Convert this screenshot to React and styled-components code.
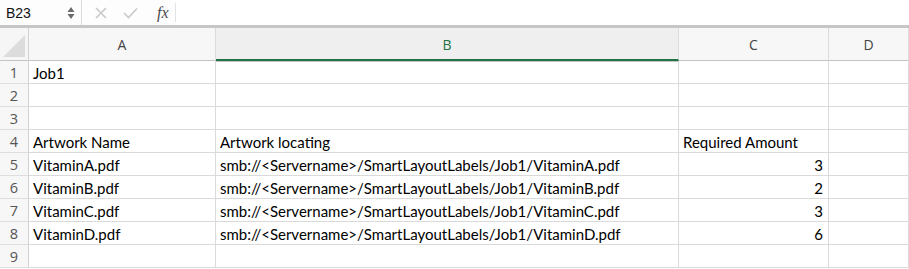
import React from "react";
import styled, { createGlobalStyle } from "styled-components";

const GlobalStyle = createGlobalStyle`
  html, body {
    margin: 0;
    padding: 0;
    background: #fff;
  }
`;

const columns = [
  { key: "A", width: 187 },
  { key: "B", width: 463, active: true },
  { key: "C", width: 150 },
  { key: "D", width: 80 },
];

const rows = [
  ["Job1", "", "", ""],
  ["", "", "", ""],
  ["", "", "", ""],
  ["Artwork Name", "Artwork locating", "Required Amount", ""],
  ["VitaminA.pdf", "smb://<Servername>/SmartLayoutLabels/Job1/VitaminA.pdf", 3, ""],
  ["VitaminB.pdf", "smb://<Servername>/SmartLayoutLabels/Job1/VitaminB.pdf", 2, ""],
  ["VitaminC.pdf", "smb://<Servername>/SmartLayoutLabels/Job1/VitaminC.pdf", 3, ""],
  ["VitaminD.pdf", "smb://<Servername>/SmartLayoutLabels/Job1/VitaminD.pdf", 6, ""],
  ["", "", "", ""],
];

const App = () => {
  return (
    <Wrapper>
      <GlobalStyle />
      {/* FORMULA BAR */}
      <FormulaBar>
        <NameBox>
          <span>B23</span>
          <Stepper>
            <svg width="8" height="14" viewBox="0 0 8 14">
              <path d="M4 1 L7.5 6 L0.5 6 Z" fill="#6b6b6b" />
              <path d="M4 13 L7.5 8 L0.5 8 Z" fill="#6b6b6b" />
            </svg>
          </Stepper>
        </NameBox>
        <Actions>
          <svg width="12" height="12" viewBox="0 0 12 12">
            <path d="M1 1 L11 11 M11 1 L1 11" stroke="#c9c9c9" strokeWidth="1.6" />
          </svg>
          <svg width="15" height="12" viewBox="0 0 15 12">
            <path d="M1 6 L5.5 10.5 L14 1.5" stroke="#c9c9c9" strokeWidth="1.6" fill="none" />
          </svg>
          <Fx>fx</Fx>
        </Actions>
        <FormulaInput />
      </FormulaBar>

      {/* SHEET */}
      <Sheet>
        <Corner>
          <svg width="22" height="22" viewBox="0 0 22 22">
            <path d="M22 0 L22 22 L0 22 Z" fill="#dcdcdc" />
          </svg>
        </Corner>
        {columns.map((col) => (
          <ColHeader key={col.key} $active={col.active}>
            {col.key}
          </ColHeader>
        ))}

        {rows.map((row, r) => (
          <React.Fragment key={r}>
            <RowHeader>{r + 1}</RowHeader>
            {row.map((val, c) => (
              <Cell key={c} $num={typeof val === "number"}>
                {val}
              </Cell>
            ))}
          </React.Fragment>
        ))}
      </Sheet>
    </Wrapper>
  );
};

const Wrapper = styled.div`
  width: 909px;
  height: 269px;
  overflow: hidden;
  background: #fff;
`;

const FormulaBar = styled.div`
  height: 25px;
  display: flex;
  align-items: stretch;
  background: #fdfdfd;
  border-bottom: 1px solid #c6c6c6;
  box-shadow: 0 2px 0 #c6c6c6;
  margin-bottom: 2px;
`;

const NameBox = styled.div`
  width: 82px;
  display: flex;
  align-items: center;
  justify-content: space-between;
  padding: 0 6px 0 6px;
  box-sizing: border-box;
  border-right: 1px solid #dcdcdc;
  font-family: "Liberation Sans", Arial, sans-serif;
  font-size: 14px;
  color: #111;
`;

const Stepper = styled.div`
  display: flex;
  align-items: center;
  padding-top: 1px;
`;

const Actions = styled.div`
  width: 94px;
  display: flex;
  align-items: center;
  gap: 16px;
  padding-left: 13px;
  box-sizing: border-box;
  border-right: 1px solid #e3e3e3;
  margin: 3px 0;
`;

const Fx = styled.span`
  font-family: "Liberation Serif", "Times New Roman", serif;
  font-style: italic;
  font-size: 16px;
  color: #4a4a4a;
  margin-left: 3px;
`;

const FormulaInput = styled.div`
  flex: 1;
  background: #fff;
`;

const Sheet = styled.div`
  display: grid;
  grid-template-columns: 29px ${columns.map((c) => `${c.width}px`).join(" ")};
  grid-template-rows: 33px repeat(9, 23px);
  font-family: Lato, "Open Sans", sans-serif;
  font-size: 15px;
`;

const Corner = styled.div`
  background: #f6f6f6;
  border-right: 1px solid #d2d2d2;
  border-bottom: 1px solid #c4c4c4;
  display: flex;
  align-items: flex-end;
  justify-content: flex-end;
  padding: 0 3px 3px 0;
  box-sizing: border-box;
`;

const ColHeader = styled.div`
  display: flex;
  align-items: center;
  justify-content: center;
  box-sizing: border-box;
  font-family: "Open Sans", sans-serif;
  font-size: 14px;
  padding-top: 1px;
  background: ${({ $active }) => ($active ? "#efefef" : "#f7f7f7")};
  color: ${({ $active }) => ($active ? "#217346" : "#444")};
  border-right: 1px solid #dcdcdc;
  border-bottom: ${({ $active }) =>
    $active ? "2px solid #217346" : "1px solid #c4c4c4"};
  box-shadow: ${({ $active }) => ($active ? "0 1px 0 #c4c4c4" : "none")};
`;

const RowHeader = styled.div`
  display: flex;
  align-items: center;
  justify-content: center;
  box-sizing: border-box;
  background: #f7f7f7;
  color: #555;
  font-family: "Open Sans", sans-serif;
  font-size: 14.5px;
  border-right: 1px solid #d2d2d2;
  border-bottom: 1px solid #dedede;
`;

const Cell = styled.div`
  display: flex;
  align-items: center;
  justify-content: ${({ $num }) => ($num ? "flex-end" : "flex-start")};
  box-sizing: border-box;
  padding: 1px 5px 0 4px;
  color: #000;
  white-space: nowrap;
  overflow: hidden;
  border-right: 1px solid #dadada;
  border-bottom: 1px solid #dadada;
`;

export default App;
